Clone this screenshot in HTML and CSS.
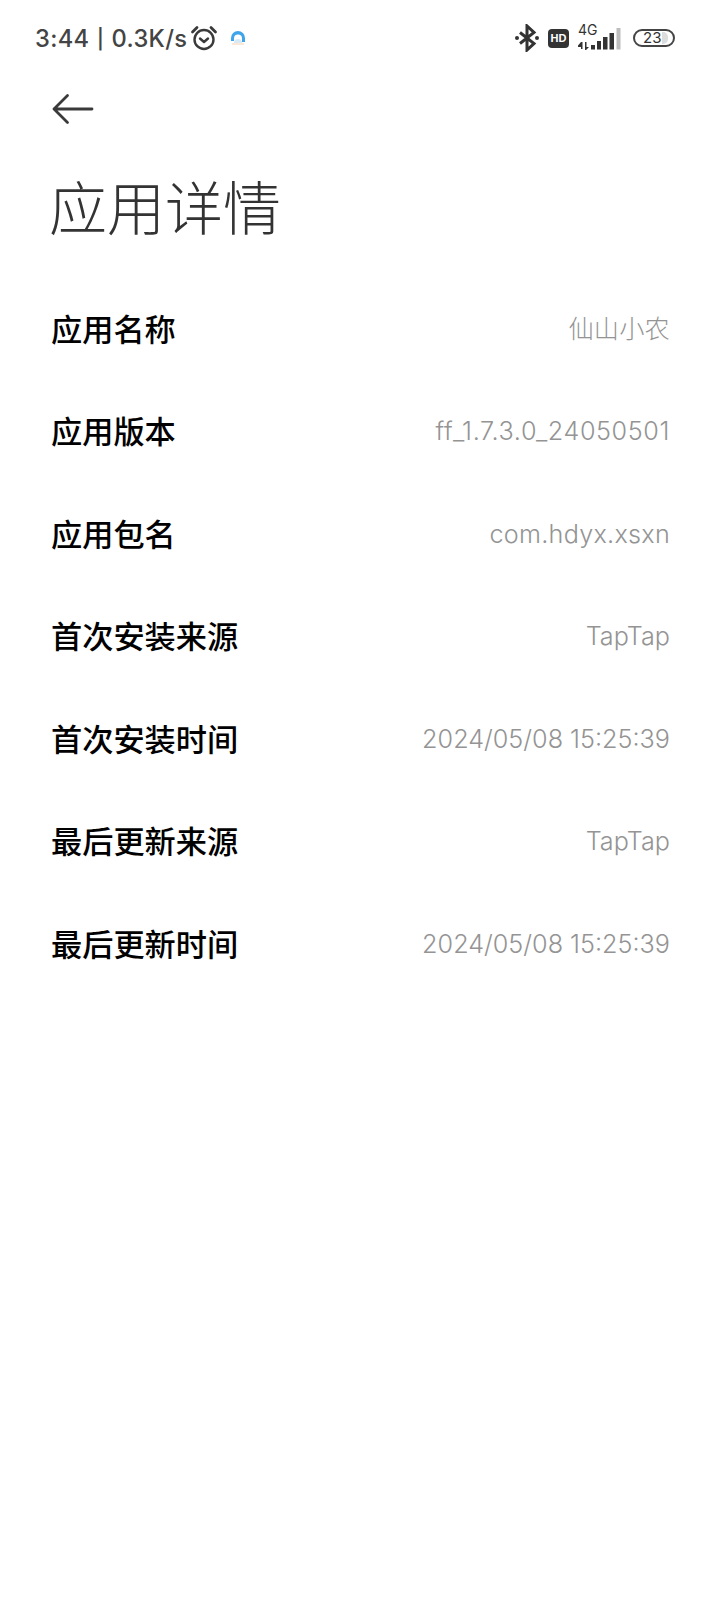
FILE: index.html
```html
<!DOCTYPE html>
<html lang="zh-CN">
<head>
<meta charset="utf-8">
<title>应用详情</title>
<link rel="stylesheet" href="styles.css">
</head>
<body>
<header class="status">
  <div class="status-left">
    <span class="status-text">3:44 <span class="pipe">|</span> 0.3K/s</span>
    <svg class="alarm" width="28" height="28" viewBox="0 0 28 28" fill="none" stroke="#3a3a3a" stroke-width="2.4">
      <circle cx="14" cy="15.5" r="9.5"/>
      <path d="M10 14.5l4 3.5 4-3.5" stroke-linecap="round" stroke-linejoin="round"/>
      <path d="M2.5 8L7 3.5M25.5 8L21 3.5" stroke-linecap="round" stroke-width="2.8"/>
    </svg>
    <svg class="app-dot" width="18" height="18" viewBox="0 0 18 18" fill="none">
      <path d="M2 12V9a7 7 0 0 1 14 0v4h-3V9.500a4 4 0 0 0-8 0V12z" fill="#3fa4ea"/>
      <path d="M5 14a4 4 0 0 1 8 0z" fill="#d6e9f6"/>
      <path d="M3 14h12v2H3z" fill="#fbe8d8"/>
    </svg>
  </div>
  <div class="status-right">
    <svg width="26" height="28" viewBox="0 0 26 28" fill="none" stroke="#333" stroke-width="3">
      <path d="M6 8.500l14 11-7 6.500V2l7 6.500-14 11"/>
      <circle cx="3" cy="14" r="2" fill="#333" stroke="none"/>
      <circle cx="23" cy="14" r="2" fill="#333" stroke="none"/>
    </svg>
    <span class="hd">HD</span>
    <div class="signal">
      <span class="net">4G</span>
      <svg width="44" height="24" viewBox="0 0 44 24">
        <path d="M1 17.500l3-3.500h1.500v7H4v-2H1zM8 14h1.500v5H12l-3 3H8z" fill="#333"/>
        <rect x="14" y="17" width="4" height="4.500" fill="#333"/>
        <rect x="20" y="13" width="4" height="8.500" fill="#333"/>
        <rect x="26" y="9" width="4.500" height="12.500" fill="#333"/>
        <rect x="32.500" y="5" width="4.500" height="16.500" fill="#333"/>
        <rect x="39.500" y="0" width="4" height="21.500" fill="#bdbdbd"/>
      </svg>
    </div>
    <div class="battery"><span class="battery-num">23</span><span class="battery-fill"></span></div>
  </div>
</header>

<nav class="nav">
  <svg width="42" height="32" viewBox="0 0 42 32" fill="none" stroke="#3a3a3a" stroke-width="2.800" stroke-linecap="round" stroke-linejoin="round">
    <path d="M40 16H2M15.500 2.500L2 16l13.500 13.500"/>
  </svg>
</nav>

<h1 class="title">应用详情</h1>

<main class="list">
  <div class="row"><span class="label">应用名称</span><span class="value value-cjk">仙山小农</span></div>
  <div class="row"><span class="label">应用版本</span><span class="value value-wide">ff_1.7.3.0_24050501</span></div>
  <div class="row"><span class="label">应用包名</span><span class="value value-loose">com.hdyx.xsxn</span></div>
  <div class="row"><span class="label">首次安装来源</span><span class="value">TapTap</span></div>
  <div class="row"><span class="label">首次安装时间</span><span class="value">2024/05/08 15:25:39</span></div>
  <div class="row"><span class="label">最后更新来源</span><span class="value">TapTap</span></div>
  <div class="row"><span class="label">最后更新时间</span><span class="value">2024/05/08 15:25:39</span></div>
</main>
</body>
</html>
```
FILE: styles.css
```css
* { box-sizing: border-box; }
html, body { margin: 0; padding: 0; background: #fff; }
body {
  width: 720px;
  height: 1600px;
  overflow: hidden;
  font-family: "Noto Sans CJK SC", "Noto Sans", sans-serif;
}
.status {
  height: 76px;
  display: flex;
  justify-content: space-between;
  align-items: center;
  padding: 0 45px 0 35px;
}
.status-left, .status-right { display: flex; align-items: center; }
.status-text {
  font-family: Inter, "Noto Sans", sans-serif;
  font-size: 23.700px;
  font-weight: 500;
  letter-spacing: 0.300px;
  color: #444;
}
.pipe { font-family: Roboto, sans-serif; font-size: 27px; font-weight: 500; line-height: 1; margin: 0 1px; }
.alarm { margin-left: 3px; }
.app-dot { margin-left: 11px; }
.status-right { gap: 8px; }
.hd {
  width: 21px;
  height: 19px;
  border-radius: 4px;
  background: #333;
  color: #fff;
  font: 700 11px/19px "Liberation Sans", sans-serif;
  text-align: center;
}
.signal { position: relative; width: 44px; height: 28px; display: flex; align-items: flex-end; }
.net {
  position: absolute;
  left: 1px;
  top: -2px;
  font: 400 14px/15px Inter, sans-serif;
  color: #333;
}
.battery {
  width: 42px;
  height: 18px;
  margin-left: 4px;
  border: 2px solid #444;
  border-radius: 9px;
  display: flex;
  align-items: center;
  padding-left: 8px;
  overflow: hidden;
}
.battery-num { font: 400 15px/16px Inter, sans-serif; color: #333; }
.battery-fill { width: 6px; height: 12px; margin-left: 1px; background: #ddd; border-radius: 0 5px 5px 0; }
.nav { height: 66px; padding: 0 0 0 52px; display: flex; align-items: center; }
.title {
  margin: 0;
  padding-left: 49px;
  margin-top: 25px;
  font-size: 58px;
  line-height: 76px;
  font-weight: 300;
  color: #333;
}
.list { margin-top: 33px; padding: 0 50px 0 51px; }
.row {
  height: 102.500px;
  display: flex;
  justify-content: space-between;
  align-items: center;
}
.label { font-size: 31.200px; font-weight: 500; color: #000; }
.value {
  padding-top: 3px;
  font-family: Inter, "Noto Sans CJK SC", sans-serif;
  font-size: 25.200px;
  font-weight: 300;
  color: #949494;
}
.value-cjk { padding-top: 0; letter-spacing: 0.200px; }
.value-wide { letter-spacing: 0.600px; }
.value-loose { letter-spacing: 0.250px; }
```
